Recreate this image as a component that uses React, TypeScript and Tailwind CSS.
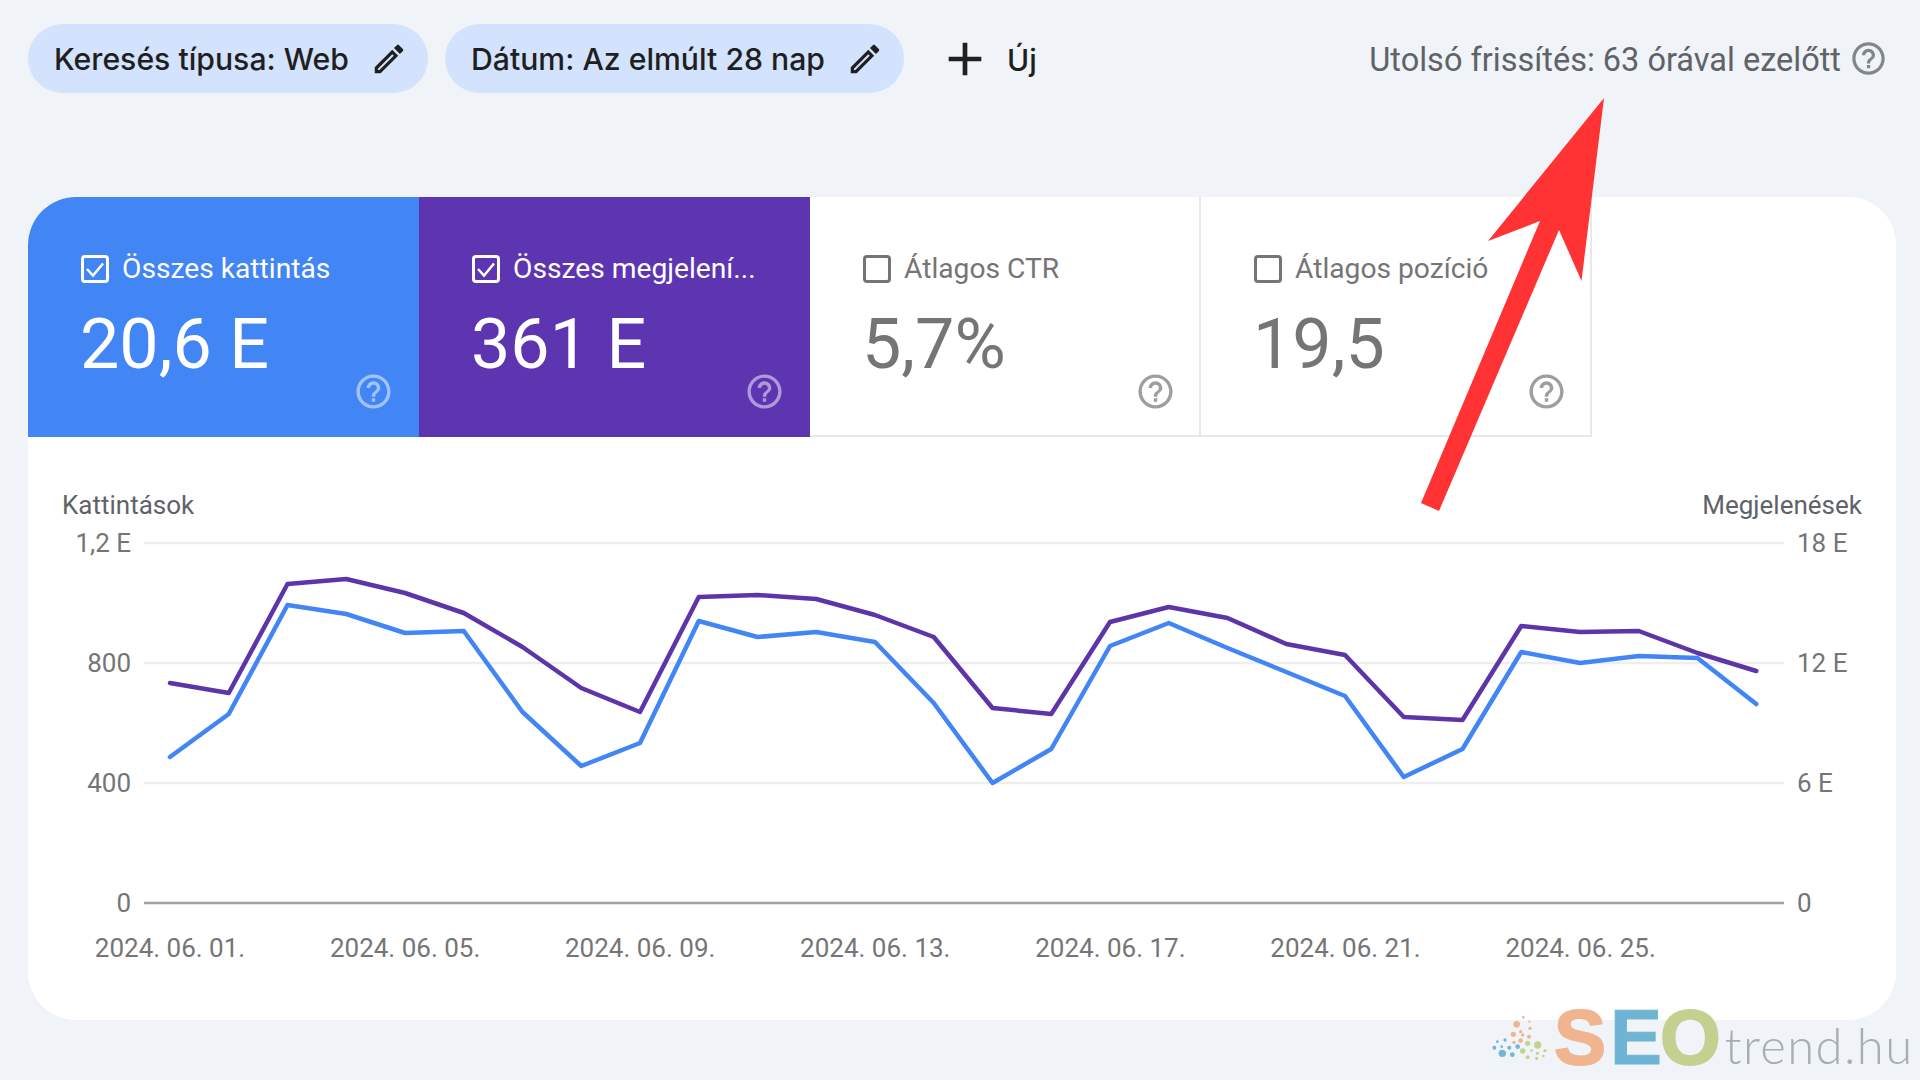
const purple = [683, 693, 584, 579, 593, 613, 647, 688, 712, 597, 595, 599, 615, 637, 708, 714, 622, 607, 618, 644, 655, 717, 720, 626, 632, 631, 653, 671];
const blue = [757, 714, 605, 614, 633, 631, 712, 766, 743, 621, 637, 632, 642, 703, 783, 749, 646, 623, 648, 672, 696, 777, 749, 652, 663, 656, 658, 704];

const toPoints = (values: number[]) =>
  values.map((y, i) => `${170 + i * 58.75},${y}`).join(' ');

const dates = ['2024. 06. 01.', '2024. 06. 05.', '2024. 06. 09.', '2024. 06. 13.', '2024. 06. 17.', '2024. 06. 21.', '2024. 06. 25.'];

const rows = [
  { y: 543, left: '1,2 E', right: '18 E' },
  { y: 663, left: '800', right: '12 E' },
  { y: 783, left: '400', right: '6 E' },
  { y: 903, left: '0', right: '0' },
];

const dots = [
  [220, 112, 4, '#f2b48e'], [238, 125, 3.5, '#f2b48e'], [200, 133, 10, '#f2b48e'], [240, 145, 5, '#f2b48e'],
  [212, 155, 5, '#f2b48e'], [190, 163, 8, '#f2b48e'], [218, 165, 5, '#f2b48e'], [237, 170, 6, '#f2b48e'],
  [212, 182, 7, '#f2b48e'], [192, 187, 5, '#f2b48e'], [165, 180, 5, '#6fb6d8'], [142, 185, 4, '#6fb6d8'],
  [133, 203, 6, '#6fb6d8'], [155, 200, 4, '#6fb6d8'], [178, 203, 6, '#6fb6d8'], [203, 200, 7, '#6fb6d8'],
  [157, 220, 11, '#6fb6d8'], [187, 224, 7, '#6fb6d8'], [233, 190, 8, '#c5d28f'], [263, 195, 11, '#c5d28f'],
  [218, 213, 8, '#c5d28f'], [245, 212, 4, '#c5d28f'], [262, 220, 5, '#c5d28f'], [285, 212, 5, '#c5d28f'],
  [233, 232, 6, '#c5d28f'], [260, 235, 5, '#c5d28f'], [280, 228, 4, '#c5d28f'],
] as const;

const HelpIcon = ({ className }: { className: string }) => (
  <svg className={className} viewBox="0 0 24 24" fill="currentColor">
    <path d="M11 18h2v-2h-2v2zm1-16C6.48 2 2 6.48 2 12s4.48 10 10 10 10-4.48 10-10S17.52 2 12 2zm0 18c-4.41 0-8-3.59-8-8s3.59-8 8-8 8 3.59 8 8-3.59 8-8 8zm0-14c-2.21 0-4 1.79-4 4h2c0-1.1.9-2 2-2s2 .9 2 2c0 2-3 1.75-3 5h2c0-2.25 3-2.5 3-5 0-2.21-1.79-4-4-4z" />
  </svg>
);

const EditIcon = () => (
  <svg className="w-[38px] h-[38px] text-[#1f1f1f]" viewBox="0 0 24 24" fill="currentColor">
    <path d="M3 17.25V21h3.75L17.81 9.94l-3.75-3.75L3 17.25zM5.92 19H5v-.92l9.06-9.06.92.92L5.92 19zM20.71 5.63l-2.34-2.34c-.2-.2-.45-.29-.71-.29s-.51.1-.7.29l-1.83 1.83 3.75 3.75 1.83-1.83c.39-.39.39-1.02 0-1.41z" />
  </svg>
);

const Chip = ({ label, width }: { label: string; width: string }) => (
  <div className={`flex items-center justify-between h-[69px] rounded-full bg-[#d3e3fd] pl-[26px] pr-[20px] ${width}`}>
    <span className="mt-[3px] font-['Inter',sans-serif] font-medium text-[30.2px] text-[#1f1f1f] whitespace-nowrap">{label}</span>
    <EditIcon />
  </div>
);

const Tile = ({ label, value, checked, className, helpClass }: { label: string; value: string; checked: boolean; className: string; helpClass: string }) => (
  <div className={`flex flex-col w-[391px] h-[240px] pt-[57px] box-border ${className}`}>
    <div className="flex items-center gap-[13px] pl-[53px]">
      <div className="relative w-[28px] h-[28px] rounded-[4px] border-[3px] border-current box-border">
        {checked && (
          <svg className="absolute -left-[3px] -top-[3px] w-[28px] h-[28px]" viewBox="0 0 28 28" fill="none" stroke="currentColor" strokeWidth="2.5">
            <polyline points="6,14 12,20.5 22,8.5" />
          </svg>
        )}
      </div>
      <span className="text-[28.2px] leading-[30px] whitespace-nowrap">{label}</span>
    </div>
    <div className="pl-[52px] mt-[20px] text-[70px] leading-[80px] whitespace-nowrap">{value}</div>
    <HelpIcon className={`w-[41px] h-[41px] self-end -mt-[13px] ${helpClass}`} />
  </div>
);

export default function App() {
  return (
    <div className="relative w-full h-screen overflow-hidden bg-[#f0f4f9] font-['Roboto',sans-serif]">
      {/* Filter bar */}
      <div className="flex items-center h-[69px] mt-[24px] pl-[28px] pr-[32px]">
        <Chip label="Keresés típusa: Web" width="w-[400px]" />
        <div className="w-[17px]" />
        <Chip label="Dátum: Az elmúlt 28 nap" width="w-[459px]" />
        <svg className="ml-[33px] w-[56px] h-[56px] text-[#1f1f1f]" viewBox="0 0 24 24" fill="currentColor">
          <path d="M19 13h-6v6h-2v-6H5v-2h6V5h2v6h6v2z" />
        </svg>
        <span className="ml-[14px] mt-[3px] font-['Inter',sans-serif] font-medium text-[30px] text-[#1f1f1f]">Új</span>
        <div className="ml-auto flex items-center gap-[8px] text-[#5f6368]">
          <span className="mt-[3px] text-[32.5px]">Utolsó frissítés: 63 órával ezelőtt</span>
          <HelpIcon className="w-[39px] h-[39px] text-[#80868b]" />
        </div>
      </div>

      {/* Main card */}
      <div className="mt-[104px] ml-[28px] w-[1868px] h-[823px] rounded-[48px] bg-white overflow-hidden">
        <div className="flex">
          <Tile label="Összes kattintás" value="20,6 E" checked className="bg-[#4285f4] text-white" helpClass="mr-[25px] text-white/50" />
          <Tile label="Összes megjelení..." value="361 E" checked className="bg-[#5e35b1] text-white" helpClass="mr-[25px] text-white/50" />
          <Tile label="Átlagos CTR" value="5,7%" checked={false} className="bg-white text-[#757575] border-r-2 border-b-2 border-[#e8e8e8]" helpClass="mr-[23px] text-[#9e9e9e]" />
          <Tile label="Átlagos pozíció" value="19,5" checked={false} className="bg-white text-[#757575] border-r-2 border-b-2 border-[#e8e8e8]" helpClass="mr-[23px] text-[#9e9e9e]" />
        </div>

        <svg className="block w-[1868px] h-[583px]" viewBox="28 437 1868 583" fontFamily="Roboto, sans-serif" fontSize="26" fill="#757575">
          <text x="62" y="514" fill="#5f6368">Kattintások</text>
          <text x="1862" y="514" textAnchor="end" fill="#5f6368">Megjelenések</text>
          {rows.map(row => (
            <g key={row.y}>
              <line x1="144" x2="1784" y1={row.y} y2={row.y} stroke={row.y === 903 ? '#a0a0a0' : '#eeeeee'} strokeWidth="2.5" />
              <text x="131" y={row.y + 9} textAnchor="end">{row.left}</text>
              <text x="1797" y={row.y + 9}>{row.right}</text>
            </g>
          ))}
          {dates.map((date, i) => (
            <text key={date} x={170 + i * 235.1} y="957" textAnchor="middle">{date}</text>
          ))}
          <polyline points={toPoints(purple)} fill="none" stroke="#5e35a8" strokeWidth="4.5" strokeLinejoin="round" strokeLinecap="round" />
          <polyline points={toPoints(blue)} fill="none" stroke="#4285f4" strokeWidth="4.5" strokeLinejoin="round" strokeLinecap="round" />
        </svg>
      </div>

      {/* Red arrow annotation */}
      <svg className="absolute left-0 top-0 w-[1920px] h-[1080px] pointer-events-none" viewBox="0 0 1920 1080">
        <polygon points="1604,98 1581.5,281 1559,230 1439,511 1421,503 1540,221 1488,241" fill="#ff3333" />
      </svg>

      {/* SEOtrend.hu watermark */}
      <svg className="absolute left-[1450px] top-[980px] w-[470px] h-[100px] pointer-events-none" viewBox="0 0 1410 300">
        {dots.map(([cx, cy, r, color], i) => (
          <circle key={i} cx={cx} cy={cy} r={r} fill={color} />
        ))}
      </svg>
      <div className="absolute left-[1554px] top-[995px] flex items-baseline h-[85px] leading-[85px] pointer-events-none">
        <span className="font-['Liberation_Sans',sans-serif] font-bold text-[78px] text-[#f0b48f] [-webkit-text-stroke:2px_#f0b48f]">S</span>
        <span className="font-['Liberation_Sans',sans-serif] font-bold text-[78px] text-[#6fb5d3] ml-[4px] [-webkit-text-stroke:1px_#6fb5d3]">E</span>
        <span className="font-['Liberation_Sans',sans-serif] font-bold text-[78px] text-[#c4d08f] -ml-[2px] [-webkit-text-stroke:2px_#c4d08f]">O</span>
        <span className="font-['Lato',sans-serif] font-light text-[49px] tracking-[1.4px] text-[#a6adb5] ml-[4px]">trend.hu</span>
      </div>
    </div>
  );
}
